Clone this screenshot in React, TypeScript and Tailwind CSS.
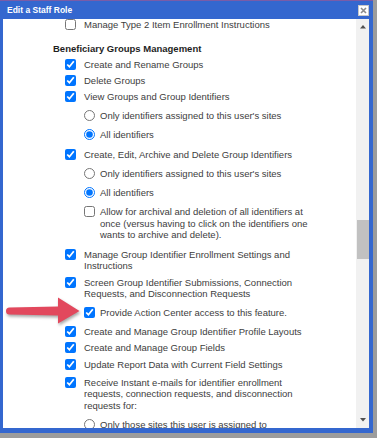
import React from "react";

type RowProps = {
  kind: "check" | "radio";
  checked?: boolean;
  sub?: boolean;
  className?: string;
  children: React.ReactNode;
};

function Row({ kind, checked = false, sub = false, className = "", children }: RowProps) {
  return (
    <div className={`flex items-start ${sub ? "ml-[31px] gap-[5px]" : "ml-[12px] gap-[8px]"} ${className}`}>
      <input
        type={kind === "check" ? "checkbox" : "radio"}
        defaultChecked={checked}
        className="m-0 h-[11px] w-[11px] shrink-0 accent-[#0075ff]"
      />
      <span className="leading-[11.3px]">{children}</span>
    </div>
  );
}

function ScrollArrow({ down = false }: { down?: boolean }) {
  return (
    <svg width="6" height="4" viewBox="0 0 6 4" className="mx-auto">
      {down ? <polygon points="0,0 6,0 3,3.5" fill="#505050" /> : <polygon points="0,3.5 6,3.5 3,0" fill="#505050" />}
    </svg>
  );
}

export default function App() {
  return (
    <div className="relative h-[438px] w-[377px] overflow-hidden bg-[#9c9c9c] font-['Liberation_Sans',Arial,sans-serif]">
      {/* dialog frame */}
      <div className="flex h-[433px] w-[373px] flex-col border-t border-[#7a5ca8] bg-[#3467cf]">
        {/* title bar */}
        <div className="flex h-[18px] shrink-0 items-center justify-between pl-[7px] pr-[4px]">
          <span className="text-[8.5px] font-bold text-white">Edit a Staff Role</span>
          <button className="flex h-[11px] w-[11px] items-center justify-center border border-[#c8c8c8] bg-white">
            <svg width="7" height="7" viewBox="0 0 7 7">
              <path d="M1 1 L6 6 M6 1 L1 6" stroke="#8a8a8a" strokeWidth="1.6" />
            </svg>
          </button>
        </div>

        {/* body */}
        <div className="mb-[5px] ml-[3px] mr-[4px] flex flex-1 overflow-hidden bg-white">
          <div className="w-[353px] overflow-hidden">
            <div className="w-[313px] pl-[50px] text-[9.5px] text-[#3d3d3d]">
              <Row kind="check">Manage Type 2 Item Enrollment Instructions</Row>
              <div className="mt-[12.4px] font-bold leading-[11.3px] text-[#1e1e1e]">Beneficiary Groups Management</div>
              <Row kind="check" checked className="mt-[4.7px]">Create and Rename Groups</Row>
              <Row kind="check" checked className="mt-[4.7px]">Delete Groups</Row>
              <Row kind="check" checked className="mt-[5.4px]">View Groups and Group Identifiers</Row>
              <Row kind="radio" sub className="mt-[7.7px]">Only identifiers assigned to this user's sites</Row>
              <Row kind="radio" sub checked className="mt-[7.7px]">All identifiers</Row>
              <Row kind="check" checked className="mt-[8.7px]">Create, Edit, Archive and Delete Group Identifiers</Row>
              <Row kind="radio" sub className="mt-[7.3px]">Only identifiers assigned to this user's sites</Row>
              <Row kind="radio" sub checked className="mt-[7.9px]">All identifiers</Row>
              <Row kind="check" sub className="mt-[8.1px]">
                Allow for archival and deletion of all identifiers at once (versus having to click on the identifiers one wants to archive and delete).
              </Row>
              <Row kind="check" checked className="mt-[8.8px]">Manage Group Identifier Enrollment Settings and Instructions</Row>
              <Row kind="check" checked className="mt-[5.3px]">Screen Group Identifier Submissions, Connection Requests, and Disconnection Requests</Row>
              <Row kind="check" sub checked className="mt-[7.4px]">Provide Action Center access to this feature.</Row>
              <Row kind="check" checked className="mt-[8px]">Create and Manage Group Identifier Profile Layouts</Row>
              <Row kind="check" checked className="mt-[4.4px]">Create and Manage Group Fields</Row>
              <Row kind="check" checked className="mt-[5.4px]">Update Report Data with Current Field Settings</Row>
              <Row kind="check" checked className="mt-[7.2px]">
                Receive Instant e-mails for identifier enrollment requests, connection requests, and disconnection requests for:
              </Row>
              <Row kind="radio" sub className="ml-[30px] mt-[8.4px]">Only those sites this user is assigned to</Row>
            </div>
          </div>

          {/* scrollbar */}
          <div className="flex w-[13px] flex-col bg-[#f1f1f1]">
            <div className="pt-[6px]">
              <ScrollArrow />
            </div>
            <div className="flex-1 pt-[191px]">
              <div className="mx-auto h-[39px] w-[12px] bg-[#c1c1c1]" />
            </div>
            <div className="pb-[6px]">
              <ScrollArrow down />
            </div>
          </div>
        </div>
      </div>

      {/* annotation arrow */}
      <svg
        className="pointer-events-none absolute left-0 top-[290px] drop-shadow-[1px_2px_1.5px_rgba(0,0,0,0.35)]"
        width="90"
        height="40"
        viewBox="0 0 90 40"
      >
        <path d="M9.5 17.5 L58 16.5 L58 7.5 L79.5 21 L58 33.5 L58 25.5 L9.5 24.5 A3.5 3.5 0 0 1 9.5 17.5 Z" fill="#e2485d" />
      </svg>
    </div>
  );
}
